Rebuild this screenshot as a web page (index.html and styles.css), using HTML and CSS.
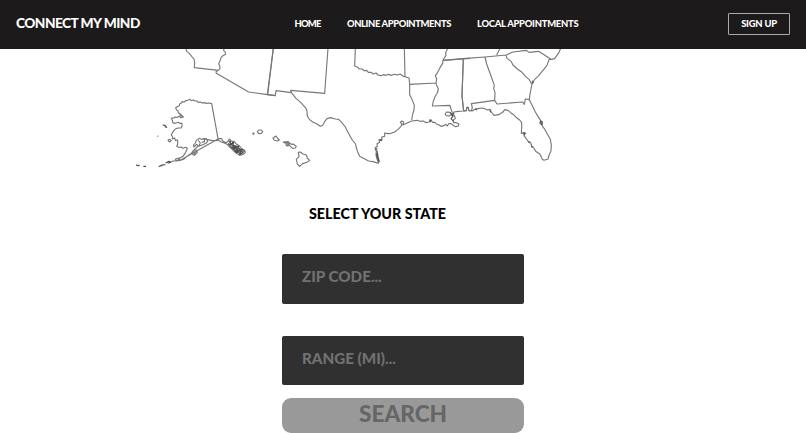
FILE: index.html
```html
<!DOCTYPE html>
<html lang="en">
<head>
<meta charset="utf-8">
<title>Connect My Mind</title>
<link rel="stylesheet" href="styles.css">
</head>
<body>
<header class="navbar">
  <a class="brand">CONNECT MY MIND</a>
  <nav class="links">
    <a class="home">HOME</a>
    <a class="online">ONLINE APPOINTMENTS</a>
    <a class="local">LOCAL APPOINTMENTS</a>
  </nav>
  <a class="signup"><span>SIGN UP</span></a>
</header>
<main>
  <svg class="map" viewBox="0 49 806 126" width="806" height="126" aria-hidden="true">
    <!-- California, Arizona, Alaska -->
    <g transform="translate(125 45) scale(.33333)">
      <path d="M183 10L185 19L193 25L200 34L207 42L209 52L208 68L280 76L285 71L284 62L281 56L285 48L288 38L294 32L302 28L300 20L296 17L297 10M280 76L273 80L274 85L371 141L428 149L452 152M445 10L428 149"/>
      <path d="M280 286L260 176L251 174L245 175L237 173L231 174L226 171L220 172L216 168L210 168L206 165L199 167L195 163L188 166L182 167L178 171L172 170L168 175L164 177L163 182L156 185L152 189L155 195L159 197L160 203L166 207L170 211L175 216L167 218L163 213L158 217L150 216L147 219L139 219L142 226L143 233L151 235L159 232L164 235L171 235L171 244L168 249L160 249L153 251L147 256L143 262L139 269L143 276L142 282L149 279L151 286L158 285L158 298L155 304L161 307L169 306L174 310L182 307L187 310L182 322L174 334L163 340L159 347L144 348L133 353M163 347L176 343L186 334L200 325L207 315L215 308L219 302L215 298L207 306L205 301L211 294L214 286L222 280L230 283L239 281L248 284L260 286L268 287L280 286L289 291L298 294L306 298L315 307L325 317L336 326L346 331L355 328L361 322L358 315L348 310L343 302L333 296L328 290L319 288L313 282L309 289L303 293L293 288L290 281L280 281Z"/>
      <path d="M220 286L226 294L221 304L233 299L243 295L248 289L244 281L237 282L239 290L230 292M201 322L207 315L214 315L217 322L208 331L203 328ZM205 324L213 319M207 327L215 323M151 343L160 339L164 344L155 347ZM129 286L134 283L139 287L134 291ZM164 207L173 217M166 212L173 214"/>
      <path class="islands" d="M311 287L322 301L335 303L348 316L359 319M310 294L321 309L331 309L341 323L352 326M317 288L315 303L328 315L336 318L348 329M324 290L319 299L338 311L334 324L349 315L343 331M309 299L326 293L323 306L341 304L337 315L354 313M328 304L330 320L345 317L356 325"/>
      <path class="islands" d="M113 240L120 241L125 247L119 245M97 273L100 274M33 359L38 362L44 361M55 364L63 364M101 365L111 360L121 359M106 361L112 363M122 354L132 349L137 352L128 355"/>
    </g>
    <!-- New Mexico, west Texas, Hawaii -->
    <g transform="translate(230 45) scale(.33333)">
      <path d="M112 149L136 152L138 137L184 143L182 136L284 145L294 10M130 10L112 149M184 143L198 160L212 172L220 181L228 190L231 198L232 213L238 223L248 231L261 237L271 244L278 241L284 230L291 221L302 218L316 222L326 223L335 232L346 246L355 264L360 273L367 285L377 297L379 309L383 320L389 334L403 341L416 348L429 350L446 355"/>
      <path d="M82 260L86 255L94 255L98 260L94 265L86 266ZM68 265L72 264L71 268ZM129 279L138 273L142 279L148 285L142 288L132 285ZM160 291L175 290L175 293L164 294ZM168 297L174 296L174 303L169 302ZM177 293L184 298L190 297L199 304L196 309L188 310L182 305L177 300ZM205 322L211 321L219 327L229 330L232 339L239 346L231 352L218 356L209 364L202 357L199 343L207 335Z"/>
    </g>
    <!-- Texas, Oklahoma, Arkansas, Louisiana, Mississippi -->
    <g transform="translate(340 45) scale(.33333)">
      <path d="M46 10L44 63L53 67L58 72L67 72L72 77L80 76L85 82L94 82L99 87L108 84L114 90L123 92L130 89L138 91L145 88L155 91L164 88L172 90L180 87L190 94L198 96L207 99L209 117L209 149L216 163L223 181L222 195L218 207L215 225M193 10L195 94M209 118L288 114M323 10L317 23L318 31L309 45L308 55L300 68L293 82L286 92L290 102L288 116L295 132L292 144L286 153L280 168L277 183L330 181L333 192L337 203M310 46L390 40M370 42L366 155L371 198"/>
      <path d="M117 355L112 345L108 330L109 318L105 309L112 304L111 296L119 292L117 284L126 284L125 276L134 274L134 264L143 266L153 265L164 261L174 253L183 244L186 237L181 232L185 228L191 231L189 240L200 235L215 228L232 226L240 229L250 228L258 233L268 231L273 224L277 232L285 232L289 237L297 240L303 244L311 242L317 238L322 243L326 236L334 236L339 241L347 245L355 243L357 237L349 233L341 233L339 226L346 220L343 211L334 209L327 213L319 212L315 207L320 201L330 202L335 208L342 201L354 199L371 198L379 197L380 188L385 187L386 195L390 198"/>
      <path class="islands" d="M111 317L114 335L118 351M109 326L116 349M112 310L106 315M119 285L126 287M268 224L273 231M331 203L339 214L333 221L341 229M342 204L336 214"/>
    </g>
    <!-- Alabama, Georgia, Florida, South Carolina -->
    <g transform="translate(440 45) scale(.33333)">
      <path d="M10 46L68 41L135 36L198 30L219 21L260 16L267 22L296 19L333 43L344 41L357 22L362 10M180 10L170 30M70 41L66 150L71 198M135 36L140 57L151 87L163 121L161 131L165 142L164 166L94 176L97 188L94 198M164 166L171 177L248 171L253 178L256 162L268 164L270 147L276 117L284 103L294 94L309 76L321 61L327 44L333 43M198 30L201 40L214 50L219 60L232 72L246 82L257 95L268 104L275 117"/>
      <path d="M71 198L79 197L81 187L85 187L86 197L97 198L104 193L115 191L125 189L134 191L143 195L150 193L154 201L162 211L176 209L188 202L194 194L204 196L212 203L222 210L228 217L239 225L245 233L245 249L244 265L255 263L252 272L258 280L266 291L273 295L275 304L283 311L287 319L300 328L307 343L312 346L324 342L328 328L333 318L334 300L331 283L322 267L315 254L306 242L307 230L302 227L294 214L286 201L277 182L268 164"/>
      <path class="islands" d="M301 229L306 231L305 239L300 235ZM249 263L256 266L251 270M108 190L109 196M264 291L271 291M273 304L280 306M150 196L152 202M276 107L280 115"/>
    </g>
  </svg>
  <form class="search">
    <h2><span>SELECT YOUR STATE</span></h2>
    <div class="field zip"><span>ZIP CODE...</span></div>
    <div class="field range"><span>RANGE (MI)...</span></div>
    <div class="submit"><span>SEARCH</span></div>
  </form>
</main>
</body>
</html>
```
FILE: styles.css
```css
* { box-sizing: border-box; }
body {
  margin: 0;
  height: 433px;
  overflow: hidden;
  background: #fff;
  font-family: Lato, "Liberation Sans", sans-serif;
  font-weight: 900;
  white-space: nowrap;
}
.navbar {
  display: grid;
  grid-template-columns: 294px 1fr 78px;
  align-items: center;
  height: 49px;
  padding: 0 16px 3px 16px;
  background: #1c1a1a;
  color: #fff;
  font-size: 9.4px;
}
.brand { padding-bottom: 2px; font-size: 13.7px; letter-spacing: -.53px; }
.links { display: flex; margin-left: -15.5px; letter-spacing: -.38px; }
.home { width: 52.5px; letter-spacing: -.8px; }
.online { width: 130px; }
.local { letter-spacing: -.24px; }
.signup {
  justify-self: end;
  display: flex;
  align-items: center;
  justify-content: center;
  width: 62px;
  height: 22px;
  margin-top: 2px;
  padding-bottom: 1px;
  border: 1px solid #aaa;
  border-radius: 1px;
  letter-spacing: -.2px;
}
.map {
  display: block;
  fill: none;
  stroke: #777;
  stroke-width: 3.4;
  stroke-linejoin: round;
}
.islands { stroke: #505050; }
.search { width: 242px; margin: 0 0 0 282px; }
h2 {
  display: flex;
  align-items: center;
  justify-content: center;
  width: 191px;
  height: 79px;
  margin: 0;
  padding-bottom: 2px;
  color: #000;
  font-size: 14.3px;
  font-weight: 900;
}
.field {
  height: 50px;
  margin-bottom: 32px;
  padding: 12px 20px;
  border-radius: 2px;
  background: #303030;
  color: #717171;
  font-size: 15.2px;
  line-height: 20px;
}
.range { height: 49px; margin-bottom: 13px; }
.submit {
  height: 35px;
  border-radius: 9px;
  background: #999;
  color: #666;
  font-size: 22.6px;
  line-height: 31px;
  text-align: center;
}
```
